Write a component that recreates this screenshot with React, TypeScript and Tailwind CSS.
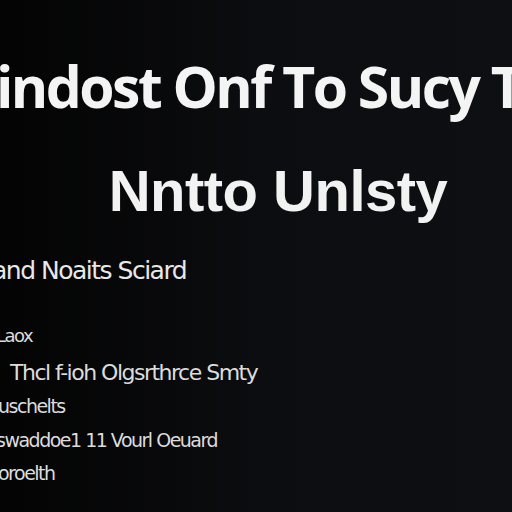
export default function App() {
  return (
    <main className="w-[512px] h-[512px] overflow-hidden bg-gradient-to-r from-[#040404] via-[#0c0d10] to-[#0e0f12] text-white">
      <div className="flex flex-col">
        {/* ── headline ── */}
        <h1 className="mt-[50px] ml-[-33px] whitespace-nowrap text-[57px] leading-[72px] font-bold tracking-[-2.5px] text-[#f4f4f4] [font-family:'Open_Sans',sans-serif]">
          Sindost Onf To Sucy To
        </h1>
        <h2 className="mt-[38px] ml-[44px] text-center whitespace-nowrap text-[58px] leading-[62px] font-bold tracking-[-0.5px] text-[#f2f2f2] [font-family:'Liberation_Sans',Arial,sans-serif]">
          Nntto Unlsty
        </h2>

        {/* ── body lines ── */}
        <p className="mt-[34px] ml-[-8px] whitespace-nowrap text-[25px] leading-[30px] text-[#e8e8e8] [font-family:'DejaVu_Sans',sans-serif] tracking-[-1.5px]">
          and Noaits Sciard
        </p>
        <div className="mt-[39px] flex flex-col text-[#dcdcdc] [font-family:'DejaVu_Sans',sans-serif] tracking-[-1.5px] whitespace-nowrap">
          <p className="ml-[-4px] text-[18px] leading-[22px]">Laox</p>
          <p className="mt-[12px] ml-[10px] text-[22px] leading-[28px]">
            Thcl f-ioh Olgsrthrce Smty
          </p>
          <p className="mt-[7px] ml-[-2px] text-[19px] leading-[24px]">uschelts</p>
          <p className="mt-[10px] ml-[-4px] text-[19px] leading-[24px]">
            swaddoe1 11 Vourl Oeuard
          </p>
          <p className="mt-[9px] ml-[-2px] text-[19px] leading-[24px]">oroelth</p>
        </div>
      </div>
    </main>
  );
}
